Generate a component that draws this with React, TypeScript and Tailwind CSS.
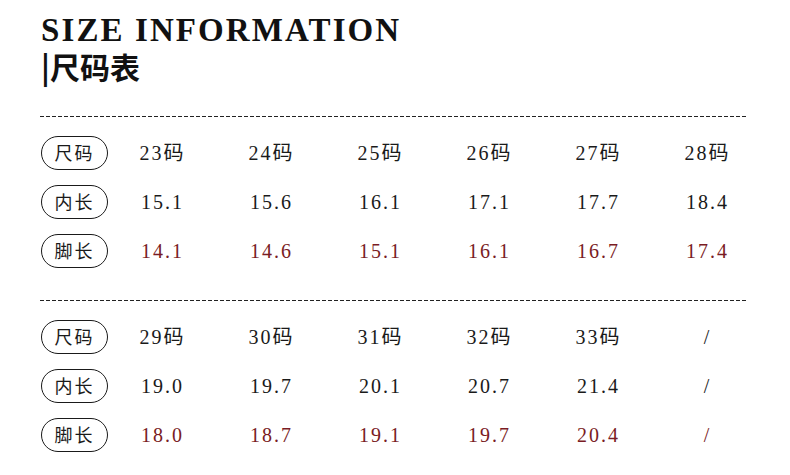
import React from "react"

const serif = "font-['Liberation_Serif','Noto_Sans_CJK_SC',serif]"

interface Group {
  sizes: string[]
  inner: string[]
  foot: string[]
}

const groups: Group[] = [
  {
    sizes: ["23码", "24码", "25码", "26码", "27码", "28码"],
    inner: ["15.1", "15.6", "16.1", "17.1", "17.7", "18.4"],
    foot: ["14.1", "14.6", "15.1", "16.1", "16.7", "17.4"],
  },
  {
    sizes: ["29码", "30码", "31码", "32码", "33码", "/"],
    inner: ["19.0", "19.7", "20.1", "20.7", "21.4", "/"],
    foot: ["18.0", "18.7", "19.1", "19.7", "20.4", "/"],
  },
]

function Dashed() {
  return (
    <div className="ml-[40px] h-px w-[708px] bg-[linear-gradient(to_right,#222_4px,transparent_4px)] bg-[length:6px_1px]" />
  )
}

function Row({ label, values, red }: { label: string; values: string[]; red?: boolean }) {
  return (
    <div className="flex h-[49px] items-center pl-[41px]">
      <div className="flex h-[34px] w-[67px] items-center justify-center rounded-full border-[1.5px] border-[#1a1a1a] text-[18px] tracking-[2px] text-[#1a1a1a] font-['Noto_Sans_CJK_SC',sans-serif]">
        {label}
      </div>
      <div className="grid grid-cols-6">
        {values.map((v, i) => (
          <div
            key={i}
            className={`w-[109px] text-center text-[20px] tracking-[2px] ${red ? "text-[#7a1c24]" : "text-[#1a1a1a]"}`}
          >
            {v}
          </div>
        ))}
      </div>
    </div>
  )
}

export default function App() {
  return (
    <div className={`h-[475px] w-[790px] overflow-hidden bg-white ${serif}`}>
      <div className="h-[116px] pl-[41px] pt-[14px]">
        <div className="text-[33px] font-bold leading-[33px] tracking-[2.1px] text-[#111]">SIZE INFORMATION</div>
        <div className="text-[30px] font-bold leading-[38px] text-[#111] font-['Noto_Sans_CJK_SC',sans-serif]">
          |尺码表
        </div>
      </div>
      <Dashed />
      <div className="pt-[11px] pb-[25px]">
        <Row label="尺码" values={groups[0].sizes} />
        <Row label="内长" values={groups[0].inner} />
        <Row label="脚长" values={groups[0].foot} red />
      </div>
      <Dashed />
      <div className="pt-[11px]">
        <Row label="尺码" values={groups[1].sizes} />
        <Row label="内长" values={groups[1].inner} />
        <Row label="脚长" values={groups[1].foot} red />
      </div>
    </div>
  )
}
